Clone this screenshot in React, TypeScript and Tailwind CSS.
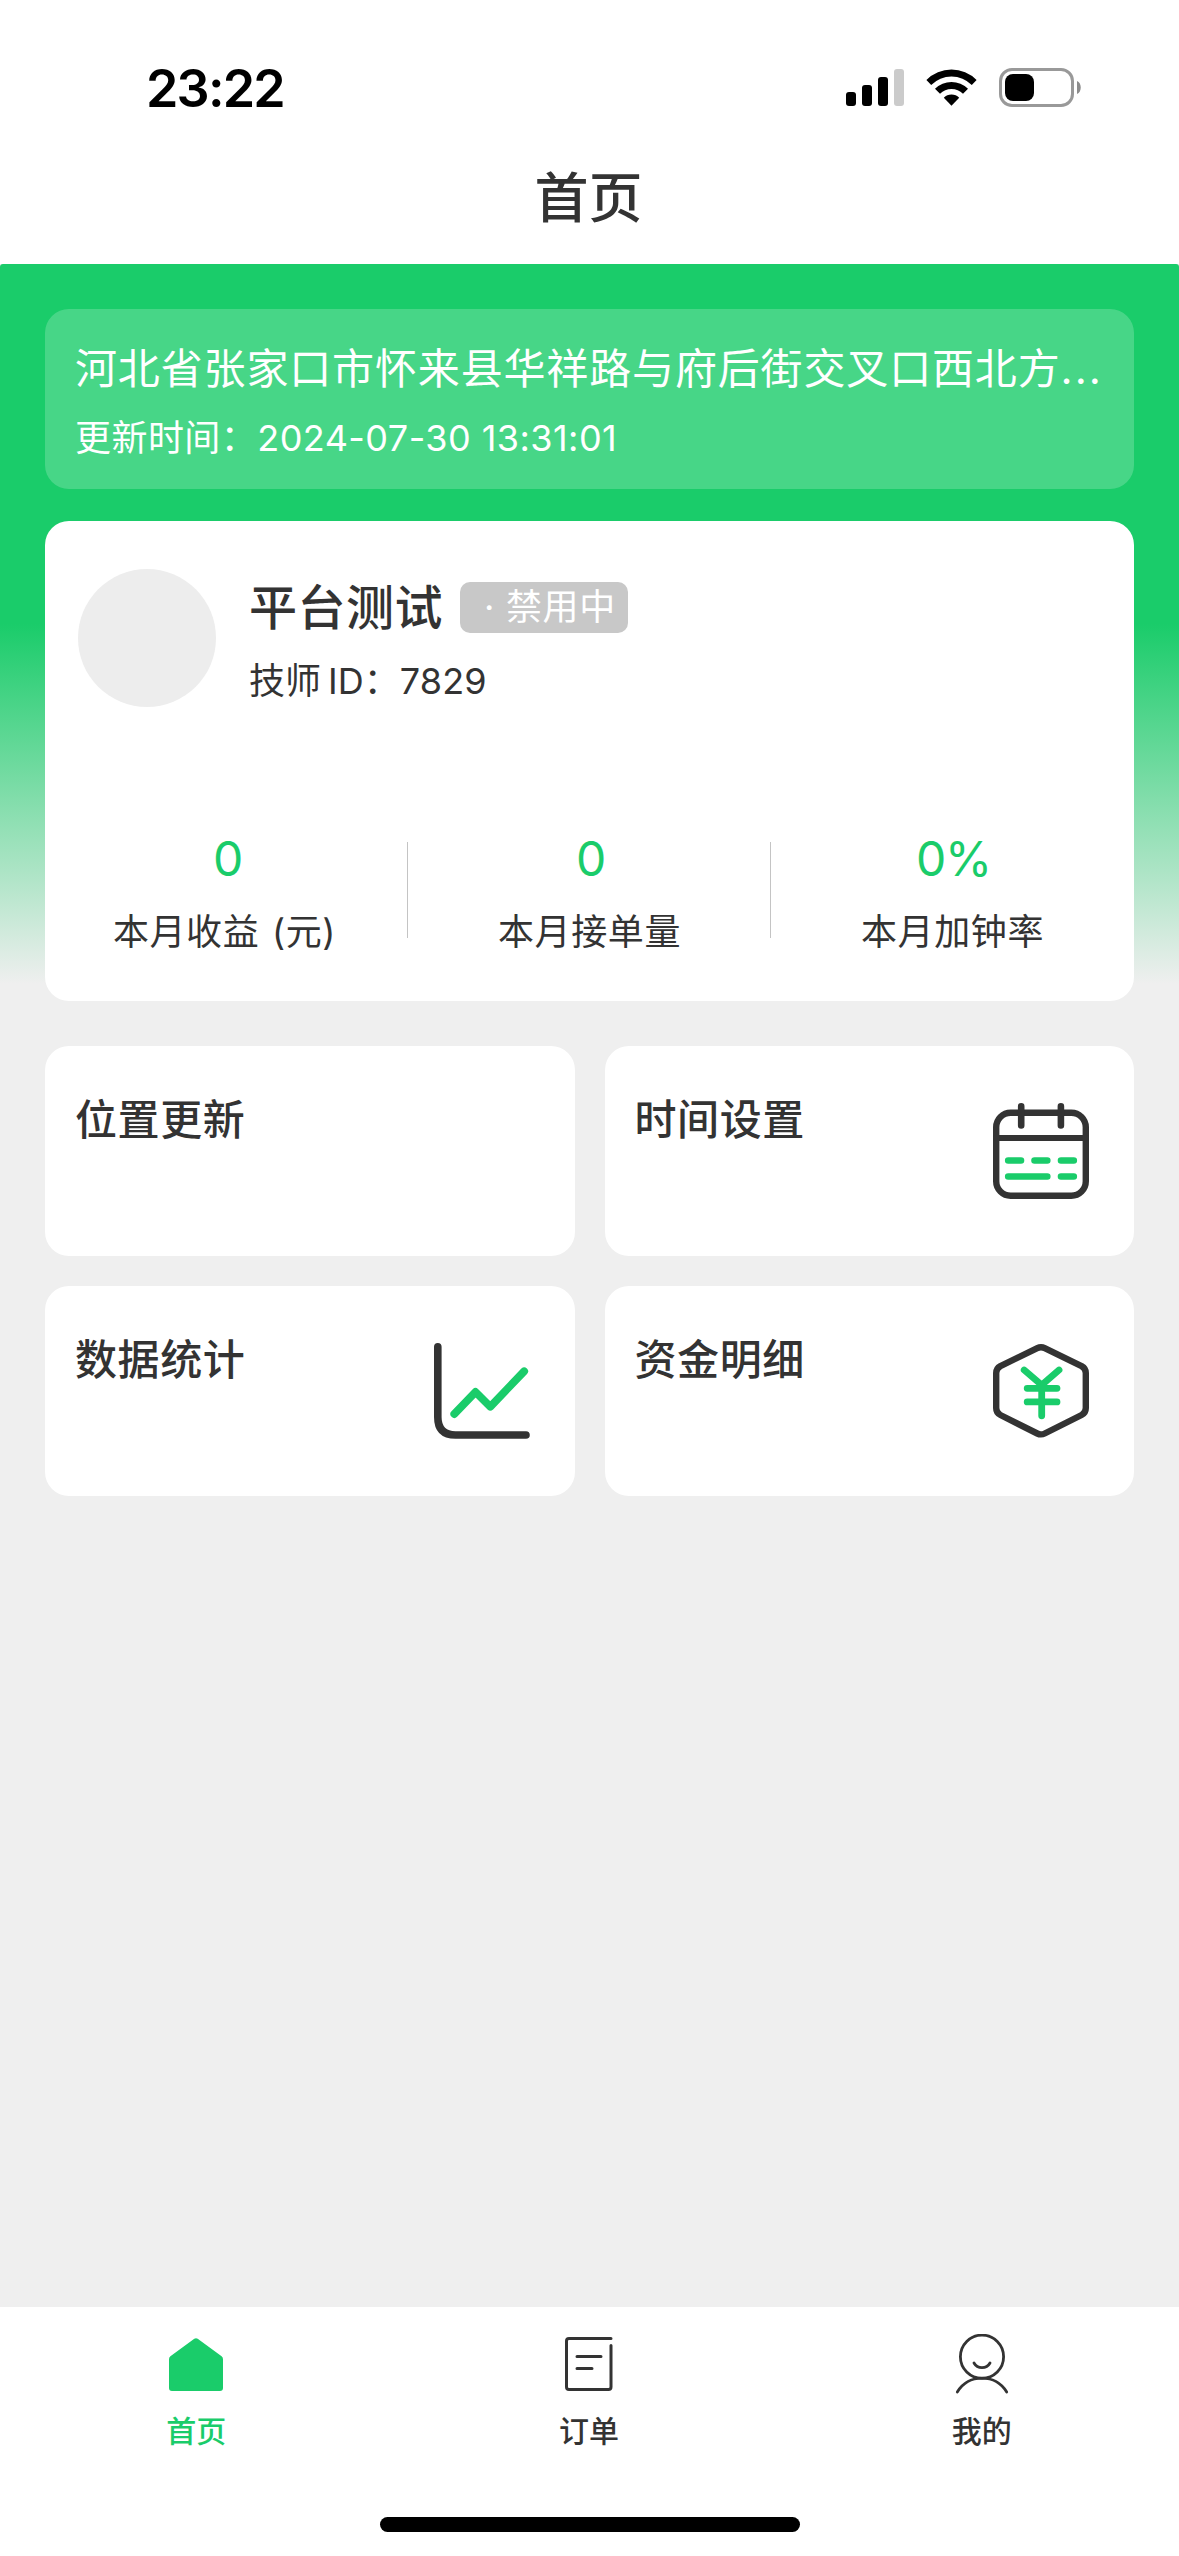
import React from "react";

interface StatItem {
    label: string;
    value: string;
}

interface MenuItem {
    title: string;
    icon?: React.ReactNode;
}

interface TabItem {
    label: string;
    icon: React.ReactNode;
    active?: boolean;
}

function SignalIcon() {
    return (
        <svg width="58" height="37" viewBox="0 0 58 37" className="ml-auto">
            <rect x="0" y="23" width="10" height="14" rx="3" fill="#000" />
            <rect x="16" y="16" width="10" height="21" rx="3" fill="#000" />
            <rect x="32" y="8" width="10" height="29" rx="3" fill="#000" />
            <rect x="48" y="0" width="10" height="37" rx="3" fill="#cbcbcb" />
        </svg>
    );
}

function WifiIcon() {
    return (
        <svg width="51" height="38" viewBox="0 0 51 38" className="ml-[22px]">
            <path d="M0.4 11 A35.5 35.5 0 0 1 50.6 11 L45.8 15.9 A28.6 28.6 0 0 0 5.2 15.9 Z" />
            <path d="M9 19.8 A23.5 23.5 0 0 1 42 19.8 L37 24.8 A16.4 16.4 0 0 0 14 24.8 Z" />
            <path d="M17.8 28.7 A11 11 0 0 1 33.2 28.7 L25.5 36.8 Z" />
        </svg>
    );
}

function BatteryIcon() {
    return (
        <svg width="83" height="39" viewBox="0 0 83 39" className="ml-[22px]">
            <rect x="1.5" y="1.5" width="72" height="36" rx="11.5" fill="none" stroke="#999" strokeWidth="3" />
            <rect x="6" y="6" width="29" height="27" rx="8" fill="#000" />
            <path d="M78 13 C83 15 83 24 78 26 Z" fill="#8c8c8c" />
        </svg>
    );
}

function CalendarIcon() {
    return (
        <svg width="96" height="96" viewBox="0 0 96 96" fill="none" strokeLinecap="round">
            <rect x="3.2" y="9.7" width="89.6" height="83.1" rx="14.5" stroke="#333" strokeWidth="6.4" />
            <path d="M3 35H93" stroke="#333" strokeWidth="6.2" />
            <path d="M28.2 3.4V22.4M67.9 3.4V22.4" stroke="#333" strokeWidth="6.6" />
            <path d="M15.2 57.5H28M41.5 57.5H54.3M68 57.5H80.8M15.2 73.5H54.3M68 73.5H80.8" stroke="#1acc6a" strokeWidth="6.6" />
        </svg>
    );
}

function ChartIcon() {
    return (
        <svg width="96" height="96" viewBox="0 0 96 96" fill="none" strokeLinecap="round">
            <path d="M3.8 3.8V74 Q3.8 92 21.5 92H92" stroke="#333" strokeWidth="7.6" />
            <path d="M20.3 71 L41.5 49 L56.3 63.7 L90.2 28.3" stroke="#1acc6a" strokeWidth="7.8" strokeLinejoin="round" />
        </svg>
    );
}

function MoneyIcon() {
    return (
        <svg width="96" height="96" viewBox="0 0 96 96" fill="none" strokeLinecap="round">
            <path
                d="M44.3 5.1 Q48 3.3 51.7 5.1 L88.6 23.1 Q92.8 25.4 92.8 30 V65 Q92.8 69.8 88.6 72 L51.7 90.5 Q48 92.3 44.3 90.5 L7.4 72 Q3.2 69.8 3.2 65 V30 Q3.2 25.4 7.4 23.1 Z"
                stroke="#333"
                strokeWidth="6.4"
                strokeLinejoin="round"
            />
            <path d="M31.2 27 L48.7 42 L66 27M34.2 45.3H64M34.2 58.9H64M48.7 42V72.8" stroke="#1acc6a" strokeWidth="6.8" />
        </svg>
    );
}

function HomeIcon() {
    return (
        <svg width="60" height="60" viewBox="0 0 60 60" fill="#1acc6a">
            <path d="M28.3 4.8 Q30 3.5 31.7 4.8 L55.6 22.2 Q57 23.4 57 25.2 V54 Q57 57 54 57 H6 Q3 57 3 54 V25.2 Q3 23.4 4.4 22.2 Z" />
        </svg>
    );
}

function OrderIcon() {
    return (
        <svg width="60" height="60" viewBox="0 0 60 60" fill="none" stroke="#333" strokeWidth="3" strokeLinecap="round">
            <path d="M52 4.5H10 Q7.5 4.5 7.5 7V53 Q7.5 55.5 10 55.5H49.5 Q52 55.5 52 53V11.5" />
            <path d="M18 22.5H42M18 34.5H33" />
        </svg>
    );
}

function MineIcon() {
    return (
        <svg width="60" height="60" viewBox="0 0 60 60" fill="none" stroke="#333" strokeWidth="2.8" strokeLinecap="round">
            <circle cx="30" cy="22.7" r="21.6" />
            <path d="M22 29 C25.5 35.2 34.5 35.2 38 29" />
            <path d="M5.3 58 C16.5 39.4 43.5 39.4 54.7 58" />
        </svg>
    );
}

const stats: StatItem[] = [
    { label: "本月收益 (元)", value: "0" },
    { label: "本月接单量", value: "0" },
    { label: "本月加钟率", value: "0%" },
];

const menus: MenuItem[] = [
    { title: "位置更新" },
    { title: "时间设置", icon: <CalendarIcon /> },
    { title: "数据统计", icon: <ChartIcon /> },
    { title: "资金明细", icon: <MoneyIcon /> },
];

const tabs: TabItem[] = [
    { label: "首页", icon: <HomeIcon />, active: true },
    { label: "订单", icon: <OrderIcon /> },
    { label: "我的", icon: <MineIcon /> },
];

function StatusBar() {
    return (
        <div className="flex h-[132px] items-center pt-[43px] pl-[146px] pr-[97px]">
            <span className="pt-0.5 text-[52px] font-semibold leading-[88px] tracking-[-1.8px] text-black">23:22</span>
            <SignalIcon />
            <WifiIcon />
            <BatteryIcon />
        </div>
    );
}

function LocationCard() {
    return (
        <section className="h-[180px] rounded-[24px] bg-white/20 pl-[30px] pr-6 pt-[30px] text-white">
            <p className="truncate text-[42px] leading-[60px] tracking-[0.85px]">
                河北省张家口市怀来县华祥路与府后街交叉口西北方<span className="tracking-[2px]">...</span>
            </p>
            <p className="mt-3 pt-px text-[36px] leading-[52px] tracking-[0.45px]">更新时间：2024-07-30 13:31:01</p>
        </section>
    );
}

function ProfileCard() {
    return (
        <section className="mt-8 h-[480px] rounded-[24px] bg-white pt-12">
            <div className="flex h-[138px] pl-[33px]">
                <div className="size-[138px] rounded-full bg-[#ededed]" />
                <div className="ml-[33px]">
                    <div className="flex h-[76px] items-center">
                        <h2 className="pt-0.5 text-[48px] font-medium leading-[76px] tracking-[0.5px] text-[#333]">平台测试</h2>
                        <span className="ml-[17px] flex h-[51px] w-[168px] items-center justify-end rounded-[10px] bg-[#c8c8c8] pr-3 text-[36px] tracking-[0.7px] text-white">
                            · 禁用中
                        </span>
                    </div>
                    <p className="mt-2.5 text-[36px] leading-[52px] tracking-[0.1px] text-[#333] [word-spacing:-3.5px]">
                        技师 ID：7829
                    </p>
                </div>
            </div>
            <div className="mt-[121px] grid grid-cols-3">
                {stats.map((item, index) => (
                    <div key={item.label} className="relative text-center">
                        {index > 0 && <i className="absolute -left-px top-[14px] h-[96px] w-px bg-[#c4c4c4]" />}
                        <p className="pl-0.5 pt-px text-[48px] leading-[60px] tracking-[-1.2px] text-[#1acc6a]">{item.value}</p>
                        <p
                            className={
                                index === 0
                                    ? "mt-[17px] pr-1 text-[36px] leading-[52px] tracking-[0.6px] text-[#333] [word-spacing:2px]"
                                    : "mt-[17px] text-[36px] leading-[52px] tracking-[0.6px] text-[#333]"
                            }
                        >
                            {item.label}
                        </p>
                    </div>
                ))}
            </div>
        </section>
    );
}

function TabBar() {
    return (
        <footer className="h-[249px] bg-white">
            <nav className="grid h-[210px] grid-cols-3 pr-px pt-[27px]">
                {tabs.map((tab) => (
                    <div key={tab.label} className="flex flex-col items-center">
                        {tab.icon}
                        <span
                            className={
                                tab.active
                                    ? "mt-[15px] text-[30px] font-medium leading-[44px] text-[#1acc6a]"
                                    : "mt-[15px] text-[30px] font-medium leading-[44px] text-[#333]"
                            }
                        >
                            {tab.label}
                        </span>
                    </div>
                ))}
            </nav>
            <div className="mx-auto h-[15px] w-[420px] rounded-full bg-black" />
        </footer>
    );
}

export default function App() {
    return (
        <div className="flex h-[2556px] w-[1179px] flex-col overflow-hidden bg-[#efefef] font-['Inter','Noto_Sans_CJK_SC',sans-serif]">
            <header className="h-[264px] bg-white">
                <StatusBar />
                <h1 className="pr-0.5 pt-px text-center text-[54px] font-medium leading-[132px] text-[#333]">首页</h1>
            </header>
            <main className="flex-1 rounded-t-[3px] bg-[linear-gradient(to_bottom,#1acc6a_360px,#efefef_720px)] px-[45px] pt-[45px]">
                <LocationCard />
                <ProfileCard />
                <div className="mt-[45px] grid grid-cols-2 gap-[30px]">
                    {menus.map((menu) => (
                        <section key={menu.title} className="flex h-[210px] justify-between rounded-[24px] bg-white pl-[30px] pr-[45px]">
                            <h3 className="mt-11 text-[42px] font-medium leading-[60px] tracking-[0.6px] text-[#333]">{menu.title}</h3>
                            <div className="mt-[57px]">{menu.icon}</div>
                        </section>
                    ))}
                </div>
            </main>
            <TabBar />
        </div>
    );
}
